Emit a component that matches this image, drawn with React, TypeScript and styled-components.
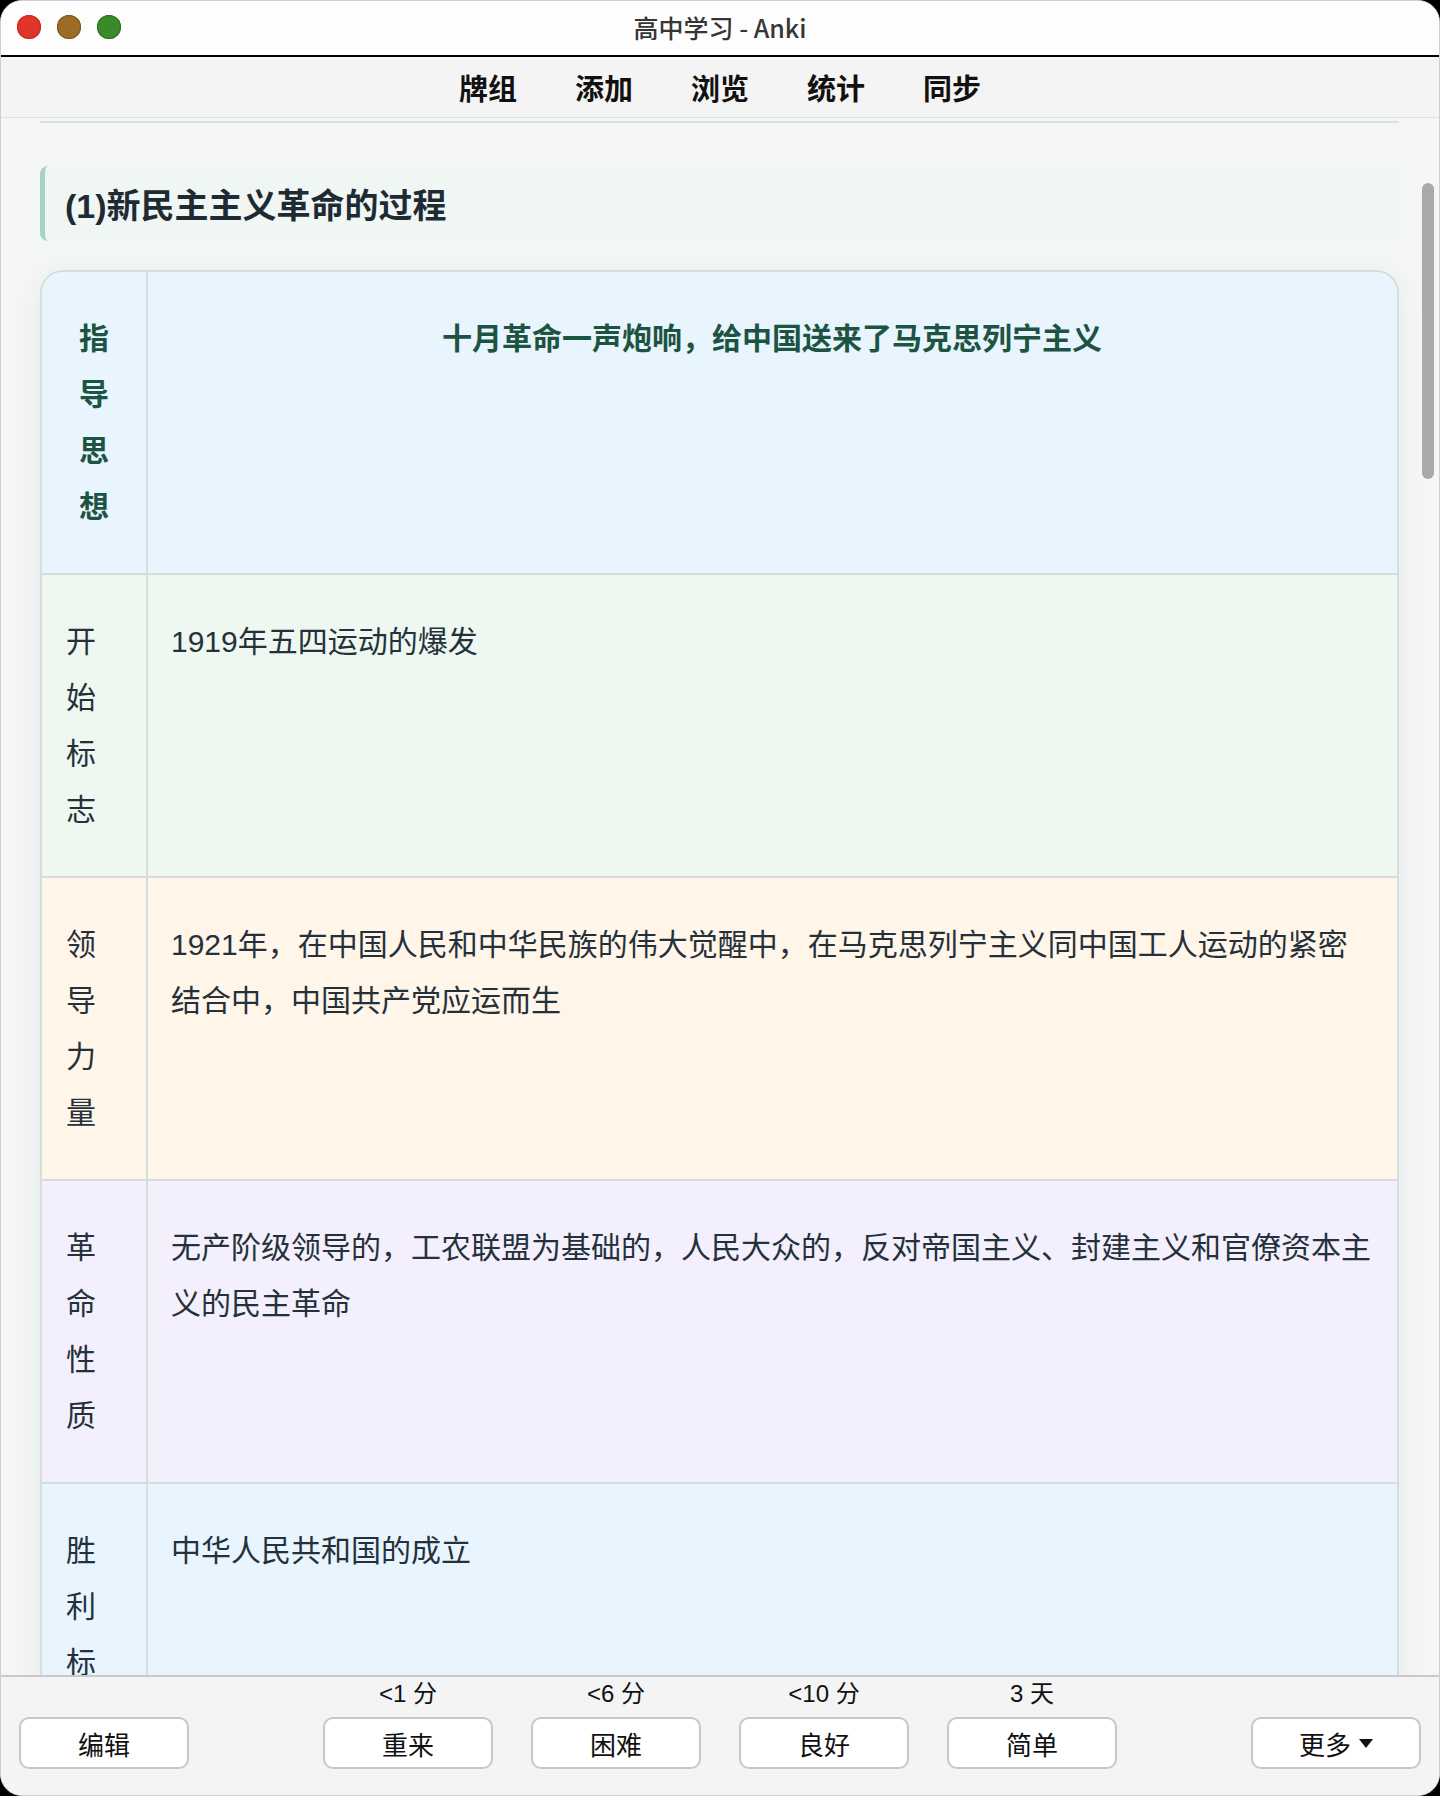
import styled, { createGlobalStyle } from "styled-components";

const GlobalStyle = createGlobalStyle`
  html, body {
    margin: 0;
    padding: 0;
    background: #000;
  }
  body {
    font-family: "Liberation Sans", "Noto Sans CJK SC", sans-serif;
    -webkit-font-smoothing: antialiased;
  }
  * {
    box-sizing: border-box;
  }
`;

const Window = styled.div`
  width: 1440px;
  height: 1796px;
  display: flex;
  flex-direction: column;
  background: #f4f4f4;
  border: 1px solid #cfcfcf;
  border-radius: 22px;
  overflow: hidden;
`;

const TitleBar = styled.header`
  height: 56px;
  flex-shrink: 0;
  display: grid;
  grid-template-columns: 1fr auto 1fr;
  align-items: center;
  padding: 0 16px 3px;
  background: #fdfdfd;
  border-bottom: 2px solid #000;
`;

const Lights = styled.div`
  display: flex;
  gap: 16px;
`;

const Light = styled.span<{ $color: string; $ring: string }>`
  width: 24px;
  height: 24px;
  border-radius: 50%;
  background: ${(p) => p.$color};
  box-shadow: inset 0 0 0 1px ${(p) => p.$ring};
`;

const WindowTitle = styled.div`
  font-family: "Noto Sans CJK SC", sans-serif;
  font-size: 25px;
  font-weight: 500;
  color: #363636;
`;

const Toolbar = styled.nav`
  height: 61px;
  flex-shrink: 0;
  display: flex;
  justify-content: center;
  align-items: center;
  gap: 58px;
  background: #f4f4f4;
  border-bottom: 1px solid #e2e2e2;
`;

const ToolLink = styled.span`
  font-family: "Noto Sans CJK SC", sans-serif;
  font-size: 29px;
  font-weight: 700;
  color: #111;
`;

const Content = styled.main`
  flex: 1;
  position: relative;
  overflow: hidden;
  background: #f5f7f7;
  padding: 3px 40px 0 39px;
`;

const Rule = styled.div`
  height: 2px;
  background: #d6e4df;
`;

const Heading = styled.h2`
  margin: 43px 0 0;
  height: 75px;
  display: flex;
  align-items: center;
  padding-left: 20px;
  background: #f0f6f4;
  border-left: 5px solid #a6d4c3;
  border-radius: 8px;
  font-family: "Liberation Sans", "Noto Sans CJK SC", sans-serif;
  font-size: 34px;
  font-weight: 700;
  color: #1f2b33;
`;

const Card = styled.section`
  margin-top: 29px;
  border: 2px solid #d4dfdb;
  border-radius: 23px;
  overflow: hidden;
  box-shadow: 0 6px 32px rgba(30, 50, 40, 0.07);
`;

const Row = styled.div<{ $bg: string }>`
  display: grid;
  grid-template-columns: 106px 1fr;
  background: ${(p) => p.$bg};
  border-bottom: 2px solid #d4dfdb;
  font-size: 30px;
  line-height: 56px;
`;

const Label = styled.div<{ $lead?: boolean }>`
  padding: 39px 24px 38px;
  border-right: 2px solid #d4dfdb;
  text-align: ${(p) => (p.$lead ? "center" : "left")};
  font-weight: ${(p) => (p.$lead ? 700 : 400)};
  color: ${(p) => (p.$lead ? "#1d5341" : "#25313a")};
`;

const Cell = styled.div<{ $lead?: boolean }>`
  padding: 39px 24px 38px 23px;
  text-align: ${(p) => (p.$lead ? "center" : "left")};
  font-weight: ${(p) => (p.$lead ? 700 : 400)};
  color: ${(p) => (p.$lead ? "#1d5341" : "#25313a")};
`;

const ScrollThumb = styled.div`
  position: absolute;
  top: 65px;
  right: 5px;
  width: 12px;
  height: 296px;
  border-radius: 6px;
  background: #a9a9a9;
`;

const BottomBar = styled.footer`
  height: 120px;
  flex-shrink: 0;
  display: grid;
  grid-template-columns: 1fr auto 1fr;
  align-items: end;
  padding: 0 18px 26px;
  background: #f4f4f4;
  border-top: 2px solid #c9c9c9;
`;

const AnswerGroup = styled.div`
  display: flex;
  gap: 38px;
`;

const AnswerSlot = styled.div`
  display: flex;
  flex-direction: column;
  align-items: center;
`;

const Due = styled.span`
  height: 30px;
  margin-bottom: 8px;
  font-size: 24px;
  line-height: 30px;
  color: #111;
`;

const Button = styled.button<{ $align?: "start" | "end" }>`
  justify-self: ${(p) => p.$align ?? "center"};
  width: 170px;
  height: 52px;
  display: flex;
  align-items: center;
  justify-content: center;
  gap: 8px;
  background: #fff;
  border: 2px solid #c7c7c7;
  border-radius: 10px;
  font-family: "Liberation Sans", "Noto Sans CJK SC", sans-serif;
  font-size: 26px;
  color: #111;
  padding: 0;
`;

const rows = [
  {
    label: "指导思想",
    text: "十月革命一声炮响，给中国送来了马克思列宁主义",
    bg: "#e8f4fe",
    lead: true,
  },
  { label: "开始标志", text: "1919年五四运动的爆发", bg: "#eef8f0" },
  {
    label: "领导力量",
    text: "1921年，在中国人民和中华民族的伟大觉醒中，在马克思列宁主义同中国工人运动的紧密结合中，中国共产党应运而生",
    bg: "#fff5e8",
  },
  {
    label: "革命性质",
    text: "无产阶级领导的，工农联盟为基础的，人民大众的，反对帝国主义、封建主义和官僚资本主义的民主革命",
    bg: "#f3effc",
  },
  { label: "胜利标志", text: "中华人民共和国的成立", bg: "#e8f4fe" },
];

const answers = [
  { due: "<1 分", name: "重来" },
  { due: "<6 分", name: "困难" },
  { due: "<10 分", name: "良好" },
  { due: "3 天", name: "简单" },
];

const App = () => (
  <>
    <GlobalStyle />
    <Window>
      <TitleBar>
        <Lights>
          <Light $color="#e0342a" $ring="#c02a20" />
          <Light $color="#9b6c26" $ring="#7e561c" />
          <Light $color="#3a8a2a" $ring="#2d7020" />
        </Lights>
        <WindowTitle>高中学习 - Anki</WindowTitle>
        <span />
      </TitleBar>
      <Toolbar>
        {["牌组", "添加", "浏览", "统计", "同步"].map((t) => (
          <ToolLink key={t}>{t}</ToolLink>
        ))}
      </Toolbar>
      <Content>
        <Rule />
        <Heading>(1)新民主主义革命的过程</Heading>
        <Card>
          {rows.map((r) => (
            <Row key={r.label} $bg={r.bg}>
              <Label $lead={r.lead}>{r.label}</Label>
              <Cell $lead={r.lead}>{r.text}</Cell>
            </Row>
          ))}
        </Card>
        <ScrollThumb />
      </Content>
      <BottomBar>
        <Button $align="start">编辑</Button>
        <AnswerGroup>
          {answers.map((a) => (
            <AnswerSlot key={a.name}>
              <Due>{a.due}</Due>
              <Button>{a.name}</Button>
            </AnswerSlot>
          ))}
        </AnswerGroup>
        <Button $align="end">
          更多
          <svg width="14" height="9" viewBox="0 0 14 9">
            <path d="M0 0h14L7 9z" fill="#111" />
          </svg>
        </Button>
      </BottomBar>
    </Window>
  </>
);

export default App;
